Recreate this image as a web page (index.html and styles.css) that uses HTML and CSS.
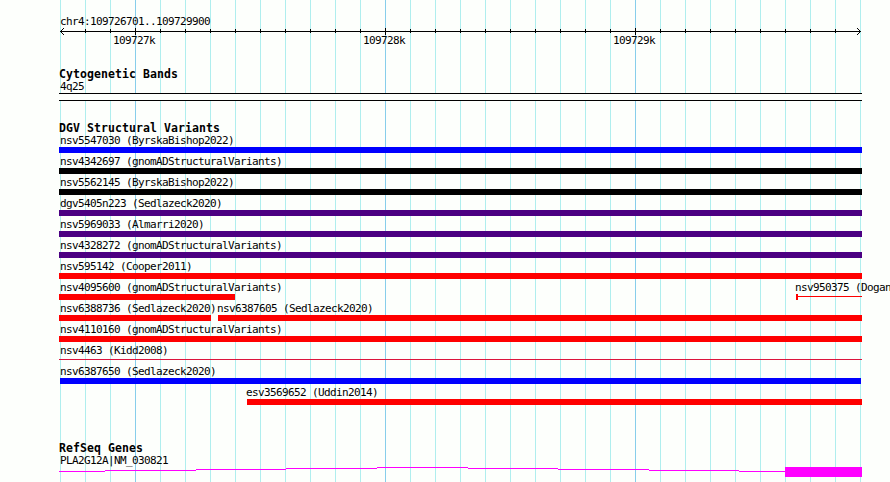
FILE: index.html
```
<!DOCTYPE html>
<html lang="en">
<head>
    <meta charset="UTF-8">
    <title>chr4:109726701..109729900</title>
    <link rel="stylesheet" href="styles.css">
</head>
<body>
    <div class="browser">
        <!-- Scale -->
        <div class="ruler">
            <div class="label">chr4:109726701..109729900</div>
            <svg class="axis" width="803" height="7" shape-rendering="crispEdges">
                <path class="line" d="M1 3h801"/>
                <path class="minor" d="M26 1v4M51 1v4M101 1v4M126 1v4M151 1v4M176 1v4M201 1v4M226 1v4M251 1v4M276 1v4M301 1v4M351 1v4M376 1v4M401 1v4M426 1v4M451 1v4M476 1v4M501 1v4M526 1v4M551 1v4M601 1v4M626 1v4M651 1v4M676 1v4M701 1v4M726 1v4M751 1v4M776 1v4"/>
                <path class="major" d="M76 0v7M326 0v7M576 0v7"/>
                <path class="head" d="M4 0h1v1h-1zM3 1h1v1h-1zM2 2h1v1h-1zM2 4h1v1h-1zM3 5h1v1h-1zM4 6h1v1h-1z"/>
                <path class="head" d="M798 0h1v1h-1zM799 1h1v1h-1zM800 2h1v1h-1zM800 4h1v1h-1zM799 5h1v1h-1zM798 6h1v1h-1z"/>
            </svg>
            <div class="numbers">
                <span>109727k</span>
                <span>109728k</span>
                <span>109729k</span>
            </div>
        </div>

        <div class="track cyto">
            <h2>Cytogenetic Bands</h2>
            <div class="label">4q25</div>
            <div class="band"></div>
        </div>

        <div class="track variants">
            <h2>DGV Structural Variants</h2>
            <div class="row"><div class="feature"><div class="label">nsv5547030 (ByrskaBishop2022)</div><div class="bar blue"></div></div></div>
            <div class="row"><div class="feature"><div class="label">nsv4342697 (gnomADStructuralVariants)</div><div class="bar black"></div></div></div>
            <div class="row"><div class="feature"><div class="label">nsv5562145 (ByrskaBishop2022)</div><div class="bar black"></div></div></div>
            <div class="row"><div class="feature"><div class="label">dgv5405n223 (Sedlazeck2020)</div><div class="bar purple"></div></div></div>
            <div class="row"><div class="feature"><div class="label">nsv5969033 (Almarri2020)</div><div class="bar purple"></div></div></div>
            <div class="row"><div class="feature"><div class="label">nsv4328272 (gnomADStructuralVariants)</div><div class="bar purple"></div></div></div>
            <div class="row"><div class="feature"><div class="label">nsv595142 (Cooper2011)</div><div class="bar red"></div></div></div>
            <div class="row split">
                <div class="feature" style="width: 176px"><div class="label">nsv4095600 (gnomADStructuralVariants)</div><div class="bar red"></div></div>
                <div class="feature" style="width: 66px"><div class="label tight">nsv950375 (Dogan2014)</div><div class="bar range"></div></div>
            </div>
            <div class="row split">
                <div class="feature" style="width: 152px"><div class="label">nsv6388736 (Sedlazeck2020)</div><div class="bar red"></div></div>
                <div class="feature" style="width: 644px"><div class="label tight">nsv6387605 (Sedlazeck2020)</div><div class="bar red"></div></div>
            </div>
            <div class="row"><div class="feature"><div class="label">nsv4110160 (gnomADStructuralVariants)</div><div class="bar red"></div></div></div>
            <div class="row"><div class="feature"><div class="label">nsv4463 (Kidd2008)</div><div class="bar thin"></div></div></div>
            <div class="row"><div class="feature"><div class="label">nsv6387650 (Sedlazeck2020)</div><div class="bar blue inset"></div></div></div>
            <div class="row split end">
                <div class="feature" style="width: 615px"><div class="label tight">esv3569652 (Uddin2014)</div><div class="bar red"></div></div>
            </div>
        </div>

        <div class="track genes">
            <h2>RefSeq Genes</h2>
            <div class="label">PLA2G12A|NM_030821</div>
            <svg class="gene" width="803" height="10" shape-rendering="crispEdges">
                <path d="M0 4h46v1H0zM46 3h91v1H46zM137 2h90v1h-90zM227 1h91v1h-91zM318 0h91v1h-91zM409 1h90v1h-90zM499 2h91v1h-91zM590 3h90v1h-90zM680 4h46v1h-46zM726 0h77v10h-77z"/>
            </svg>
        </div>
    </div>
</body>
</html>
```

FILE: styles.css
```
body {
    margin: 0;
    background-color: #fdfffc;
    color: #000;
    font-family: "DejaVu Sans Mono", "Liberation Mono", monospace;
    font-size: 11px;
    letter-spacing: -0.622px;
    overflow: hidden;
}
/* vertical grid lines, one every 25px, darker every 250px */
.browser {
    box-sizing: border-box;
    width: 803px;
    height: 482px;
    margin-left: 59px;
    padding-top: 15px;
    background-image:
        repeating-linear-gradient(to right, #87ceeb 0, #87ceeb 1px, transparent 1px, transparent 250px),
        repeating-linear-gradient(to right, #afeeee 0, #afeeee 1px, transparent 1px, transparent 25px);
    background-position: 76px 0, 1px 0;
    background-size: 250px 100%, 25px 100%;
}
.label {
    height: 13px;
    line-height: 13px;
    padding-left: 1px;
    white-space: nowrap;
}
.label.tight {
    padding-left: 0;
    margin-left: -1px;
}
h2 {
    margin: 0;
    height: 12px;
    line-height: 12px;
    font-size: 11.5px;
    font-weight: bold;
    letter-spacing: 0.077px;
}
svg {
    display: block;
}
/* Scale */
.axis path {
    fill: none;
    stroke: #000;
    transform: translate(0.5px, 0.5px);
}
.axis .minor,
.axis .major {
    transform: translate(0.5px, 0);
}
.axis .line {
    transform: translate(0, 0.5px);
}
.axis .head {
    fill: #000;
    stroke: none;
    transform: none;
}
.numbers {
    display: flex;
    gap: 208px;
    height: 13px;
    line-height: 13px;
    margin-top: -1px;
    padding-left: 54px;
}
.numbers span {
    width: 42px;
}
/* Tracks */
.cyto {
    margin-top: 21px;
}
.band {
    height: 6px;
    background-color: #fdfffc;
    border-top: 1px solid #000;
    border-bottom: 1px solid #000;
}
.variants {
    margin-top: 21px;
}
.row {
    height: 21px;
}
.split {
    display: flex;
    justify-content: space-between;
}
.end {
    justify-content: flex-end;
}
.bar {
    height: 6px;
}
.blue {
    background-color: #0000ff;
}
.black {
    background-color: #000;
}
.purple {
    background-color: #4b0082;
}
.red {
    background-color: #ff0000;
}
.inset {
    margin: 0 1px;
}
.thin {
    height: 1px;
    margin-top: 2px;
    background-color: #dc143c;
}
.range {
    box-sizing: border-box;
    border-left: 2px solid #ff0000;
    background: linear-gradient(#ff0000, #ff0000) 0 2px / 100% 1px no-repeat;
}
.genes {
    margin-top: 35px;
}
.gene {
    fill: #ff00ff;
}
```
